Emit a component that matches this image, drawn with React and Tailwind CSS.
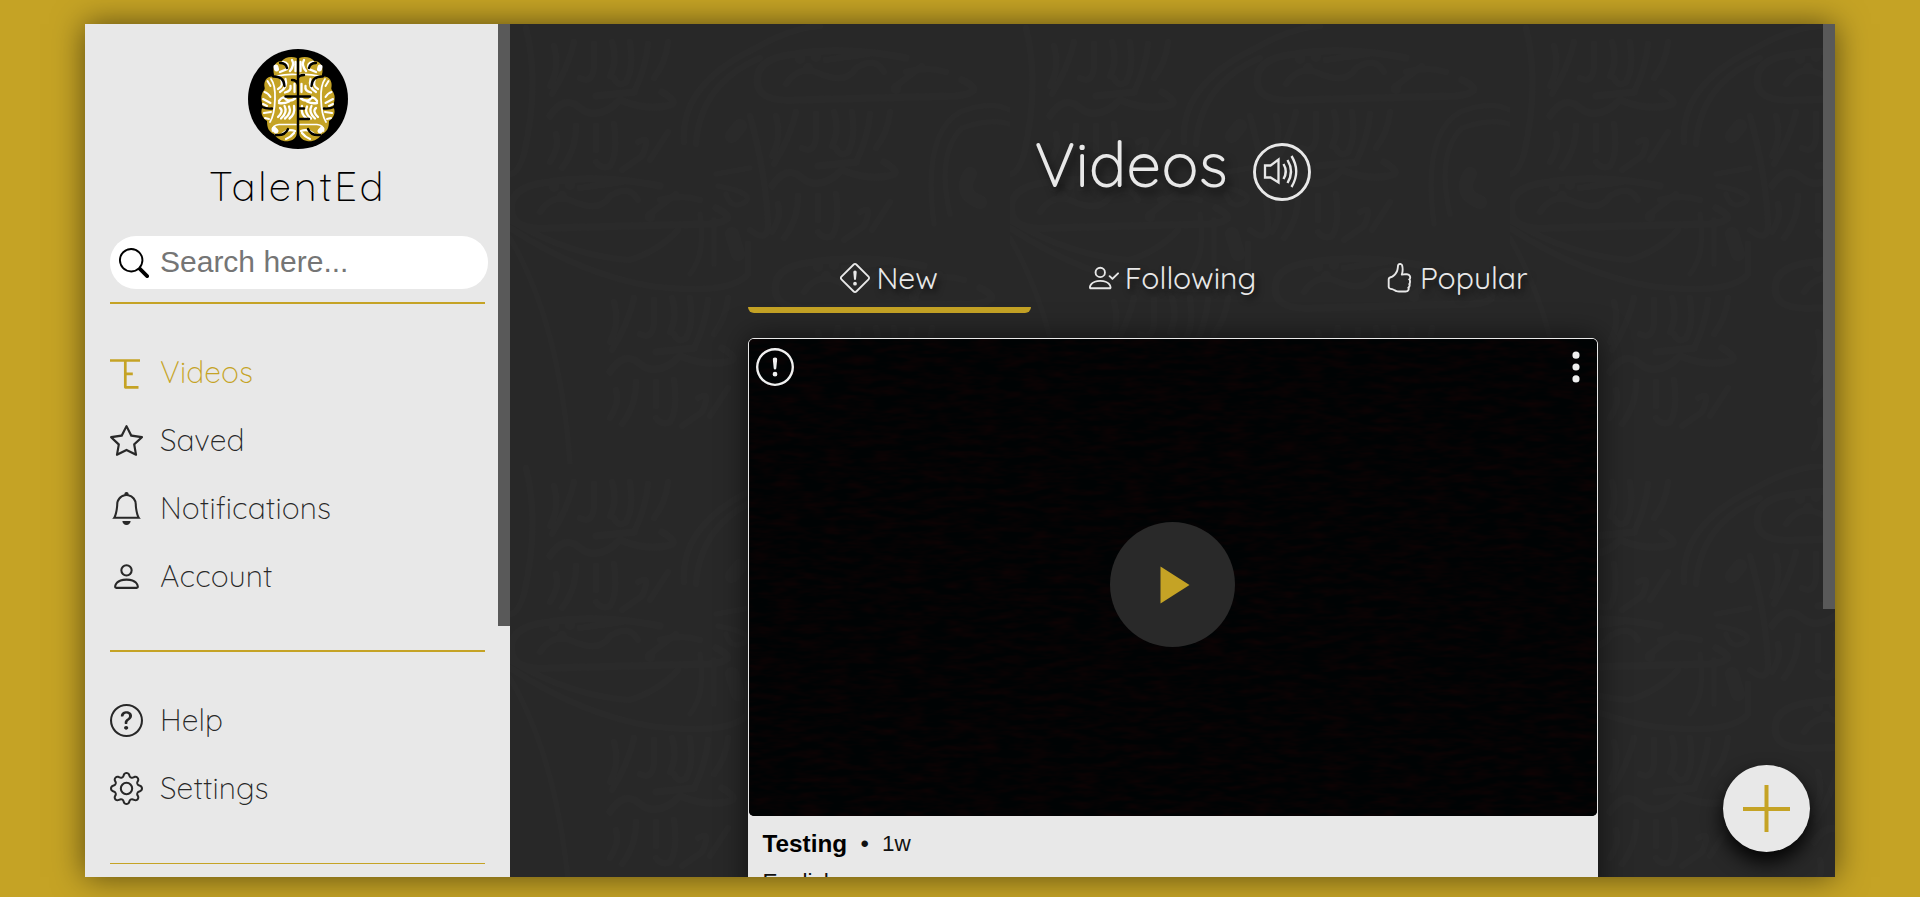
import React from "react";
import {
  BsBell,
  BsExclamationCircle,
  BsExclamationDiamond,
  BsGear,
  BsHandThumbsUp,
  BsPerson,
  BsQuestionCircle,
  BsSearch,
  BsStar,
  BsThreeDotsVertical,
} from "react-icons/bs";

const HALF_BRAIN =
  "M49 9C43 7 37 8 34 12C28 12 25 17 25.500 22C25.500 25 27 26.500 25 27.500C19 27 15.500 32 16.500 38C17.500 41 15 41.500 14 45C12 50 15 55 14.500 58C12 63 14 69 19 72C19 79 21 83 26 85C29 90 36 93.500 41 92C46 91 49 88 49 83Z";

function BrainHalf() {
  return (
    <g>
      <path d={HALF_BRAIN} fill="#c5a325" />
      <g fill="none" stroke="#fff" strokeWidth="2" strokeLinecap="round">
        <path d="M23 30Q27.500 36 27 50Q26.500 66 22 73" strokeWidth="1.800" />
        <path d="M19.500 32L22.500 37M16.500 43Q20 44 22.500 48M15 50L22.500 54M15 55L19 57M16 64L23 63M17 69L21 70" />
        <path d="M29 27Q38 25 48 25.500M48 75.500H31Q24.500 76 24.500 82" strokeWidth="1.700" />
        <path d="M33 30Q36 37 30 40M37.500 30Q40 38 32 43M42.500 37Q43.500 42 37 43.500M46.500 35V43" strokeWidth="2.300" />
        <path d="M31 52Q35 46 38 50.500Q43 53 47 49.500M31 54Q36 55 41 52.500" strokeWidth="2.400" />
        <path d="M32 59Q36 62 30 68M36.500 57Q40 63 33 69.500M41 57.500Q44 64 37 69.500M46 57Q47.500 65 41.500 69.500" strokeWidth="2.300" />
        <path d="M35 13Q42 14 39 20L32 23M44 11Q47 16 42 22M47.500 13V22" strokeWidth="2.400" />
        <path d="M33 86Q40 79 47 82M38 90Q43 88 46 84" strokeWidth="2.200" />
        <path d="M28 18L28.500 20M26 80L28 82" strokeWidth="5" />
      </g>
      <g fill="none" stroke="#000" strokeWidth="2.300" strokeLinecap="round">
        <path d="M25 27.500Q36 27 36.500 37M32 14Q38 14 39 19M14 58Q18 60 24 59.500M28 86Q37 87 40 80" />
      </g>
    </g>
  );
}

function Logo() {
  return (
    <svg viewBox="0 0 100 100" className="size-[100px]">
      <circle cx="50" cy="50" r="50" fill="#000" />
      <BrainHalf />
      <g transform="translate(100 0) scale(-1 1)">
        <BrainHalf />
      </g>
      <g fill="none" stroke="#000" strokeWidth="2.400" strokeLinecap="round">
        <path d="M50 8V93M37.500 47.500H62M50 59.500H56M50 70H61M44 31Q49 31 50 36M50 29Q51 26 56 26" />
      </g>
    </svg>
  );
}

function BrandMark() {
  return (
    <svg viewBox="0 0 30 30" className="size-[30px]" fill="none" stroke="#c5a325" strokeWidth="2.700">
      <path d="M0 1.500H30M15.300 1.500V28.300H28.500M15.300 14.800H22.800" strokeLinejoin="round" />
    </svg>
  );
}

function PersonCheck() {
  return (
    <svg viewBox="0 0 16 16" fill="currentColor" className="size-[30px]">
      <path
        fillRule="evenodd"
        d="M8 5a2 2 0 1 1-4 0 2 2 0 0 1 4 0zM6 8a3 3 0 1 0 0-6 3 3 0 0 0 0 6zm6 5c0 1-1 1-1 1H1s-1 0-1-1 1-4 6-4 6 3 6 4zm-1-.004c-.001-.246-.154-.986-.832-1.664C9.516 10.680 8.289 10 6 10c-2.290 0-3.516.680-4.168 1.332-.678.678-.830 1.418-.832 1.664h10zm4.854-7.850a.5.5 0 0 1 0 .708l-3 3a.5.5 0 0 1-.708 0l-1.500-1.500a.5.5 0 0 1 .708-.708L12.500 7.793l2.646-2.647a.5.5 0 0 1 .708 0z"
      />
    </svg>
  );
}

function SoundIcon() {
  return (
    <svg viewBox="0 0 58 58" className="size-[58px]" fill="none" stroke="#e8e8e8">
      <circle cx="29" cy="29" r="27.500" strokeWidth="2.900" />
      <path d="M12 22.500H17.500L25.500 16.500V39.500L17.500 34.500H12Z" strokeWidth="2.300" />
      <path
        d="M30.500 21Q35 28.500 30.500 36M34.500 17Q41.500 28.500 34.500 40M38.500 13Q48 28.500 38.500 44"
        strokeWidth="2.400"
      />
    </svg>
  );
}

/* Faint calligraphic ornament behind the feed. */
function Ornament() {
  return (
    <svg className="absolute inset-0 size-full opacity-80">
      <defs>
        <g id="strokes" fill="none" stroke="#2b2b2b" strokeLinecap="round">
          <path strokeWidth="6" d="M8 8Q14 30 4 48M28 4Q22 30 6 56M48 6V30Q46 46 34 40M66 4Q72 22 64 38M84 4Q88 30 80 44Q72 50 68 40M102 6Q100 30 88 54M122 4Q120 24 108 40" />
          <path strokeWidth="7" d="M4 78Q18 56 34 70Q52 84 74 62Q98 72 120 68Q136 66 116 54M50 58L88 54" />
          <path strokeWidth="6" d="M10 96Q14 108 4 124M30 88Q30 112 16 130M50 88V112M68 86Q72 116 64 128Q56 132 50 124M92 104Q106 96 96 118L76 132M122 94L104 122" />
        </g>
        <g id="cartouche" fill="none" stroke="#2b2b2b" strokeLinecap="round">
          <path strokeWidth="7" d="M150 16Q90 4 40 12Q-4 16 2 44Q6 60 40 58L200 54Q232 50 206 38" />
          <path strokeWidth="6" d="M30 42Q42 24 60 30Q90 44 100 26Q120 14 128 30M140 44L166 24M70 18L112 12M150 30Q172 24 190 30" />
          <path strokeWidth="10" d="M44 16V17M60 14V15M52 26V27M140 46V47" />
        </g>
        <pattern id="ornament" width="500" height="440" patternUnits="userSpaceOnUse">
          <use href="#strokes" x="36" y="14" />
          <use href="#strokes" x="258" y="84" />
          <use href="#cartouche" x="246" y="18" />
          <use href="#cartouche" x="0" y="146" />
          <use href="#strokes" x="96" y="270" />
          <use href="#cartouche" x="264" y="226" />
          <use href="#strokes" x="300" y="300" />
          <g fill="none" stroke="#2b2b2b" strokeLinecap="round">
            <path strokeWidth="6" d="M16 4Q30 60 14 130Q8 150 0 150M174 118Q170 60 246 24Q280 4 310 2M186 120Q190 60 250 34M240 92Q256 150 258 200Q258 220 240 206M0 196Q60 232 120 236Q150 226 168 206M0 204Q70 250 140 262Q220 272 238 250V220" />
            <path strokeWidth="5" d="M424 200Q412 110 450 88Q480 76 500 86M440 190Q426 130 452 104Q480 94 500 100M0 214Q50 300 60 440M206 150L240 144M208 162Q250 170 232 180Q220 184 216 170M190 190Q196 230 180 250M204 196V240" />
            <path strokeWidth="14" d="M222 112L230 102M222 210L228 230M460 150Q448 170 470 178" />
          </g>
        </pattern>
      </defs>
      <rect width="100%" height="100%" fill="url(#ornament)" />
    </svg>
  );
}

function NavItem({ icon, label, active }) {
  return (
    <a className={active ? "flex h-[68px] items-center text-[#c5a325]" : "flex h-[68px] items-center text-[#282828]"}>
      <span className={active ? "w-[50px] pt-[3px]" : "w-[50px] text-[33px]"}>{icon}</span>
      <span className="pt-px">{label}</span>
    </a>
  );
}

function Tab({ icon, label, active }) {
  return (
    <div
      className={
        active
          ? "flex flex-1 items-center justify-center gap-[6px] rounded-b-[6px] border-b-[6px] border-[#c5a325]"
          : "flex flex-1 items-center justify-center gap-[6px] border-b-[6px] border-transparent"
      }
    >
      <span className="text-[30px]">{icon}</span>
      <span className="[text-shadow:3px_4px_6px_rgba(0,0,0,0.6)]">{label}</span>
    </div>
  );
}

function Sidebar() {
  return (
    <aside className="relative flex w-[425px] shrink-0 flex-col overflow-hidden bg-[#e8e8e8] px-[25px] pt-[25px] font-['Quicksand','Open_Sans',sans-serif] text-[30px] font-[340] tracking-[0.1px]">
      <div className="flex justify-center">
        <Logo />
      </div>
      <h1 className="mt-[7px] text-center text-[40px] leading-[60px] tracking-[2.6px] text-black">TalentEd</h1>
      <div className="mt-5 flex h-[53px] w-[378px] shrink-0 items-center rounded-[26px] bg-white pl-[9px]">
        <BsSearch className="size-[30px] shrink-0 text-black" />
        <span className="-mt-[2px] ml-[11px] font-['Liberation_Sans',sans-serif] text-[30px] font-normal tracking-normal text-[#757575]">
          Search here...
        </span>
      </div>
      <div className="mt-[13px] h-[2px] shrink-0 bg-[#c5a325]" />
      <nav className="mt-[34px]">
        <NavItem active icon={<BrandMark />} label="Videos" />
        <NavItem icon={<BsStar />} label="Saved" />
        <NavItem icon={<BsBell />} label="Notifications" />
        <NavItem icon={<BsPerson />} label="Account" />
      </nav>
      <div className="mt-10 h-[2px] shrink-0 bg-[#c5a325]" />
      <nav className="mt-[34px]">
        <NavItem icon={<BsQuestionCircle />} label="Help" />
        <NavItem icon={<BsGear />} label="Settings" />
      </nav>
      <div className="mt-[41px] h-px shrink-0 bg-[#c5a325]" />
      <div className="absolute right-0 top-0 h-[602px] w-3 bg-[#595959]" />
    </aside>
  );
}

function VideoCard() {
  return (
    <article className="mt-[25px] w-[850px] shrink-0 rounded-[6px] border border-[#e8e8e8] bg-[#e8e8e8] shadow-[0_0_30px_rgba(0,0,0,0.6)]">
      <div className="relative flex h-[477px] items-center justify-center overflow-hidden rounded-[5px] bg-[#040305]">
        <svg className="absolute inset-0 size-full">
          <filter id="grain" x="0" y="0" width="100%" height="100%" colorInterpolationFilters="sRGB">
            <feTurbulence type="fractalNoise" baseFrequency="0.04 0.16" numOctaves="3" seed="4" />
            <feColorMatrix values="0.1 0 0 0 -0.036  0 0 0 0 0.010  0 0 0 0 0.016  0 0 0 0 1" />
          </filter>
          <rect width="100%" height="100%" filter="url(#grain)" />
        </svg>
        <BsExclamationCircle className="absolute left-[7px] top-[9px] size-[38px] text-[#f0f0f0]" />
        <BsThreeDotsVertical className="absolute right-[1.5px] top-[9px] size-[38px] text-[#f0f0f0]" />
        <div className="relative mt-[14px] flex size-[125px] items-center justify-center rounded-full bg-[#292929]">
          <svg viewBox="0 0 30 38" className="ml-[5px] h-[38px] w-[30px]">
            <path d="M0.500 0.500L29.500 19L0.500 37.500Z" fill="#c5a325" />
          </svg>
        </div>
      </div>
      <div className="px-[14px] pt-[9px] font-['Liberation_Sans',sans-serif] text-[22.5px] leading-[38px] text-[#111]">
        <div className="flex items-center">
          <b className="text-[24.3px] text-black">Testing</b>
          <span className="ml-[13.5px] text-[24px]">•</span>
          <span className="ml-[13px]">1w</span>
        </div>
        <div>English</div>
      </div>
    </article>
  );
}

export default function App() {
  return (
    <div className="flex h-[897px] w-[1920px] overflow-hidden bg-[#c5a325] pb-5 pl-[85px] pr-[85px] pt-6">
      <div className="flex flex-1 shadow-[0_0_30px_rgba(0,0,0,0.55)]">
        <Sidebar />
        <main className="relative flex flex-1 flex-col items-center overflow-hidden bg-[#282828] font-['Quicksand','Open_Sans',sans-serif] text-[#e8e8e8]">
          <Ornament />
          <div className="relative flex w-full flex-col items-center">
            <header className="mt-[100px] flex h-20 items-center gap-[25px]">
              <h2 className="text-[62px] font-normal leading-[80px] [text-shadow:4px_6px_8px_rgba(0,0,0,0.6)]">Videos</h2>
              <span className="mt-[15px]">
                <SoundIcon />
              </span>
            </header>
            <div className="mt-11 flex h-[65px] w-[850px] text-[30px] font-normal leading-none">
              <Tab active icon={<BsExclamationDiamond />} label="New" />
              <Tab icon={<PersonCheck />} label="Following" />
              <Tab icon={<BsHandThumbsUp />} label="Popular" />
            </div>
            <VideoCard />
          </div>
          <div className="absolute right-0 top-0 h-[585px] w-3 bg-[#595959]" />
          <button className="absolute bottom-[25px] right-[25px] flex size-[87px] items-center justify-center rounded-full bg-[#e8e8e8] shadow-[0_10px_20px_rgba(0,0,0,0.95)]">
            <svg viewBox="0 0 47 47" className="size-[47px]" stroke="#c5a325" strokeWidth="4">
              <path d="M23.500 0V47M0 24H47" />
            </svg>
          </button>
        </main>
      </div>
    </div>
  );
}
